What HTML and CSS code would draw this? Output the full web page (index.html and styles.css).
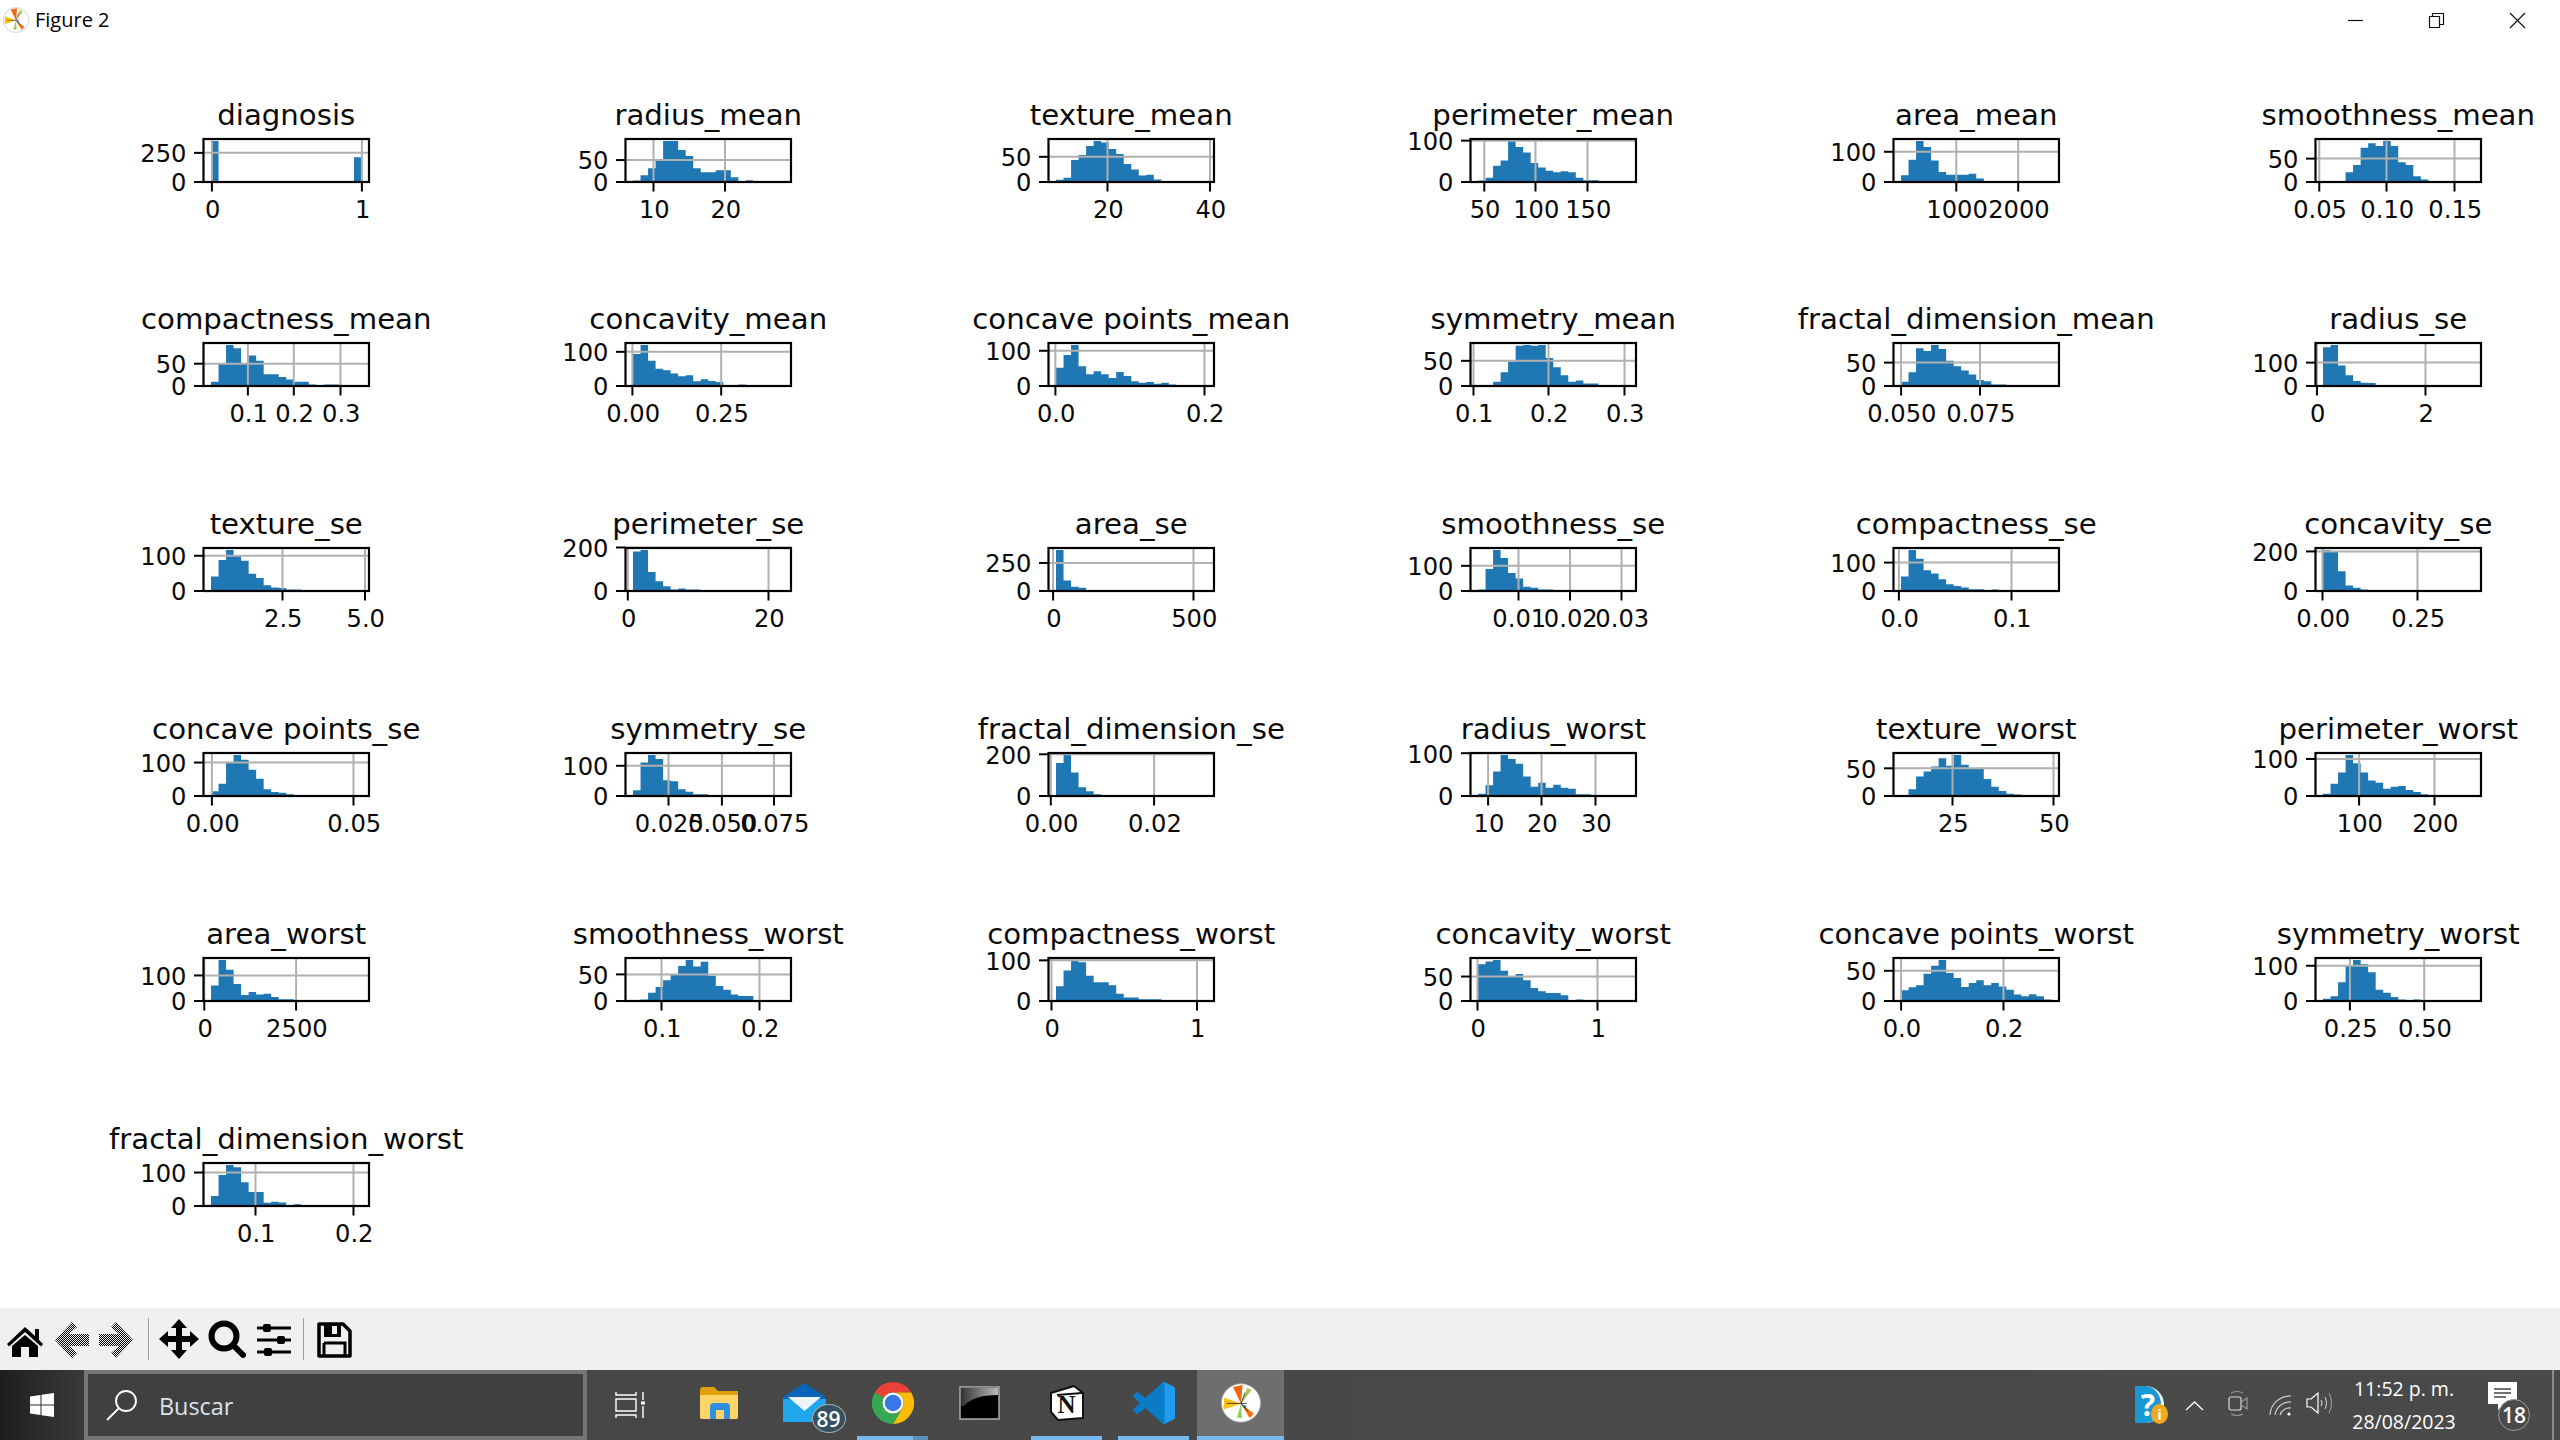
FILE: index.html
```html
<!DOCTYPE html>
<html lang="es">
<head>
<meta charset="utf-8">
<title>Figure 2</title>
<link rel="stylesheet" href="styles.css">
</head>
<body>
<svg class="defs" width="0" height="0" aria-hidden="true">
  <defs>
    <pattern id="dither" width="2" height="2" patternUnits="userSpaceOnUse">
      <rect width="1" height="1" fill="#000"/><rect x="1" y="1" width="1" height="1" fill="#000"/>
    </pattern>
    <linearGradient id="sheen" x1="0" y1="0" x2="1" y2="0"><stop offset="0" stop-color="#333"/><stop offset="1" stop-color="#bbb"/></linearGradient>
    <symbol id="mpl" viewBox="0 0 100 100">
      <ellipse cx="50" cy="50" rx="49" ry="48" fill="#fff" stroke="#aaa" stroke-width="2"/>
      <path d="M50 52 30 10 54 5Z" fill="#f5660f"/>
      <path d="M50 52 8 36 6 66Z" fill="#fbc40a"/>
      <path d="M50 52 66 12 76 18Z" fill="#a6c84a"/>
      <path d="M50 52 40 86 52 88Z" fill="#8ed05a"/>
      <path d="M50 52 82 76 72 88Z" fill="#f0740c"/>
      <path d="M50 52 64 58 60 64Z" fill="#3a6fb0"/>
      <path d="M14 51H64M50 52 60 24M50 52 68 70" stroke="#222" stroke-width="2" fill="none"/>
    </symbol>
  </defs>
</svg>

<header class="titlebar">
  <div class="title-left">
    <svg class="title-icon" width="26" height="28"><use href="#mpl"/></svg>
    <span class="title-text">Figure 2</span>
  </div>
  <div class="win-controls">
    <button class="win-btn"><svg width="17" height="17" viewBox="0 0 17 17"><path d="M1 8.5H16" stroke="#111" stroke-width="1.2"/></svg></button>
    <button class="win-btn"><svg width="17" height="17" viewBox="0 0 17 17"><path d="M1.5 4.5H11.5V15.5H1.5ZM4.5 4.5V1.5H15.5V12.5H11.5" fill="none" stroke="#111" stroke-width="1.2"/></svg></button>
    <button class="win-btn"><svg width="17" height="17" viewBox="0 0 17 17"><path d="M1 1 16 16M16 1 1 16" stroke="#111" stroke-width="1.2"/></svg></button>
  </div>
</header>

<main class="figure" id="figure"></main>

<nav class="toolbar">
  <svg class="tool tool-home" width="36" height="30" viewBox="0 0 36 30"><path d="M18 0 28 9V2H32V13L36 17 34 19.500 18 5 2 19.500 0 17Z" fill="#000"/><path d="M18 8 31 19V30H22V20H14V30H5V19Z" fill="#000"/></svg>
  <svg class="tool tool-back" width="34" height="36" viewBox="0 0 34 36"><path d="M0 18 17 0 22 5 14 12H34V24H14L22 31 17 36Z" fill="url(#dither)"/></svg>
  <svg class="tool tool-fwd" width="34" height="36" viewBox="0 0 34 36"><path d="M34 18 17 0 12 5 20 12H0V24H20L12 31 17 36Z" fill="url(#dither)"/></svg>
  <i class="tool-sep"></i>
  <svg class="tool tool-move" width="40" height="40" viewBox="0 0 40 40"><path d="M20 0 28 9H23V17H31V12L40 20 31 28V23H23V31H28L20 40 12 31H17V23H9V28L0 20 9 12V17H17V9H12Z" fill="#000"/></svg>
  <svg class="tool tool-zoom" width="38" height="38" viewBox="0 0 38 38"><circle cx="16" cy="16" r="12.500" fill="none" stroke="#000" stroke-width="6"/><path d="M25 25 35 35" stroke="#000" stroke-width="6" stroke-linecap="round"/></svg>
  <svg class="tool tool-sliders" width="34" height="32" viewBox="0 0 34 32"><path d="M0 4H34M0 16H34M0 28H34" stroke="#000" stroke-width="3"/><rect x="6" y="0" width="8" height="8" rx="2"/><rect x="20" y="12" width="8" height="8" rx="2"/><rect x="7" y="24" width="8" height="8" rx="2"/></svg>
  <i class="tool-sep"></i>
  <svg class="tool tool-save" width="35" height="36" viewBox="0 0 35 36"><path d="M2 2H26L33 9V34H2Z" fill="none" stroke="#000" stroke-width="3.500" stroke-linejoin="round"/><path d="M7 2H24V15H7Z" fill="#000"/><rect x="15" y="4" width="5" height="8" fill="#f0f0f0"/><path d="M7 21H28V33" fill="none" stroke="#000" stroke-width="3"/><path d="M7 21V33" stroke="#000" stroke-width="3"/></svg>
</nav>

<footer class="taskbar">
  <div class="start">
    <svg width="24" height="24" viewBox="0 0 24 24"><path d="M0 3.500 10.500 2V11.500H0ZM11.500 1.800 24 0V11.500H11.500ZM0 12.500H10.500V22L0 20.500ZM11.500 12.500H24V24L11.500 22.200Z" fill="#fff"/></svg>
  </div>
  <div class="searchbox">
    <svg class="search-ico" width="32" height="32" viewBox="0 0 32 32"><circle cx="20" cy="12" r="10" fill="none" stroke="#fff" stroke-width="1.800"/><path d="M13 19 1 31" stroke="#fff" stroke-width="1.800"/></svg>
    <span class="search-text">Buscar</span>
  </div>
  <div class="slots">
    <div class="slot slot-taskview">
      <svg width="30" height="28" viewBox="0 0 30 28"><path d="M1 1V4H21V1M1 8H21V20H1ZM1 27V24H21V27M28 1V9M28 15V27" fill="none" stroke="#fff" stroke-width="1.400"/><rect x="26" y="10.500" width="4" height="3" fill="#fff"/></svg>
    </div>
    <div class="slot">
      <svg width="38" height="32" viewBox="0 0 38 32"><path d="M0 3Q0 0 3 0H14L18 4H38V30Q38 32 36 32H2Q0 32 0 30Z" fill="#e0a20c"/><path d="M0 8H38V30Q38 32 36 32H2Q0 32 0 30Z" fill="#fdd567"/><path d="M10 32V20Q10 16 14 16H26Q30 16 30 20V32H24V23H16V32Z" fill="#2f8fe0"/></svg>
    </div>
    <div class="slot">
      <div class="badged">
        <svg width="43" height="40" viewBox="0 0 43 40"><path d="M0 14 21.500 0 43 14V39H0Z" fill="#0a64b8"/><path d="M0 16H43V39H0Z" fill="#1fa6ec"/><path d="M5 14H38L21.500 28Z" fill="#eef4f8"/></svg>
        <span class="badge badge-mail">89</span>
      </div>
    </div>
    <div class="slot running split">
      <svg width="42" height="42" viewBox="3 3 42 42"><path d="M24 3A21 21 0 0 1 42.200 13.500H24A10.500 10.500 0 0 0 14.900 18.750L5.800 13.500A21 21 0 0 1 24 3Z" fill="#ea4335"/><path d="M42.200 13.500A21 21 0 0 1 24 45L33.100 29.250A10.500 10.500 0 0 0 24 13.500Z" fill="#fbbc05"/><path d="M24 45A21 21 0 0 1 5.800 13.500L14.900 18.750A10.500 10.500 0 0 0 33.100 29.250Z" fill="#34a853"/><circle cx="24" cy="24" r="10.500" fill="#fff"/><circle cx="24" cy="24" r="8.300" fill="#3b78e7"/></svg>
    </div>
    <div class="slot">
      <svg width="41" height="34" viewBox="0 0 41 34"><rect x="1" y="1" width="39" height="32" fill="#000" stroke="#a9adb3" stroke-width="1.500"/><path d="M2 2H39V9Q14 9 5 20H2Z" fill="url(#sheen)"/></svg>
    </div>
    <div class="slot running">
      <div class="notion">
        <svg width="34" height="36" viewBox="0 0 34 36"><path d="M1 8 24 1 33 8V33L8 35 1 27Z" fill="#fff" stroke="#111" stroke-width="2" stroke-linejoin="round"/><path d="M7 10 32 8" stroke="#111" stroke-width="2"/></svg>
        <span class="notion-n">N</span>
      </div>
    </div>
    <div class="slot running">
      <svg width="42" height="42" viewBox="0 0 100 100"><path d="M70.900 99.300C72.500 99.900 74.300 99.900 75.900 99.100L96.500 89.200C98.600 88.200 100 86 100 83.600V16.400C100 14 98.600 11.800 96.500 10.800L75.900 .9C73.800-.1 71.300.1 69.500 1.400 69.300 1.600 69 1.800 68.800 2.100L29.400 38 12.200 25C10.600 23.800 8.400 23.900 6.900 25.200L1.400 30.300C-.5 31.900-.5 34.800 1.400 36.400L16.200 50 1.400 63.600C-.5 65.200-.5 68.100 1.400 69.700L6.900 74.800C8.400 76.100 10.600 76.200 12.200 75L29.400 62 68.800 97.900C69.400 98.500 70.100 99 70.900 99.300ZM75 27.300 45.100 50 75 72.700Z" fill="#0a7cc4"/><path d="M75.900 99.100 96.500 89.200C98.600 88.200 100 86 100 83.600V16.400C100 14 98.600 11.800 96.500 10.800L75.900 .9C74.300.1 72.500 0 71 .6 73.500 2 75 4.500 75 7.500V92.500C75 95.500 73.500 98 71 99.400 72.500 100 74.300 99.900 75.900 99.100Z" fill="#1f9cf0"/></svg>
    </div>
    <div class="slot running active">
      <svg width="40" height="40"><use href="#mpl"/></svg>
    </div>
  </div>
  <div class="tray">
    <div class="tray-help">
      <span class="help-q">?</span>
      <span class="help-i">i</span>
    </div>
    <svg class="tray-chev" width="19" height="11" viewBox="0 0 19 11"><path d="M1 10 9.500 2 18 10" fill="none" stroke="#fff" stroke-width="1.300"/></svg>
    <svg class="tray-cam" width="20" height="27" viewBox="0 0 20 27"><rect x="1" y="7" width="12" height="13" rx="2" fill="none" stroke="#ddd" stroke-width="1.200"/><path d="M13 12 19 8V19L13 15" fill="none" stroke="#999" stroke-width="1.200"/><path d="M3 3Q9 0 15 3M3 24Q9 27 15 24" fill="none" stroke="#999" stroke-width="1.100"/></svg>
    <svg class="tray-wifi" width="23" height="22" viewBox="0 0 23 22"><path d="M1 21A20 20 0 0 1 22 2" fill="none" stroke="#ccc" stroke-width="1.200"/><path d="M6 21A15 15 0 0 1 22 8" fill="none" stroke="#ccc" stroke-width="1.200"/><path d="M11 21A10 10 0 0 1 22 14" fill="none" stroke="#ccc" stroke-width="1.200"/><circle cx="20" cy="20" r="1.600" fill="#fff"/></svg>
    <svg class="tray-vol" width="27" height="24" viewBox="0 0 27 24"><path d="M1 8H5L12 2V22L5 16H1Z" fill="none" stroke="#fff" stroke-width="1.200"/><path d="M15 9Q17 12 15 15M19 6Q22 12 19 18" fill="none" stroke="#ccc" stroke-width="1.100"/><path d="M23 2Q28 12 23 22" fill="none" stroke="#999" stroke-width="1.100"/></svg>
    <div class="clock">
      <span class="clock-time">11:52 p. m.</span>
      <span class="clock-date">28/08/2023</span>
    </div>
    <div class="notif">
      <svg width="29" height="28" viewBox="0 0 29 28"><path d="M0 0H29V22H18L10 28V22H0Z" fill="#fff"/><path d="M6 7H23M6 11H23M6 15H18" stroke="#444" stroke-width="1.500"/></svg>
      <span class="badge badge-notif">18</span>
    </div>
    <i class="show-desktop"></i>
  </div>
</footer>
<script src="charts.js"></script>
</body>
</html>
```
FILE: styles.css
```css
* { box-sizing: border-box; }
html, body { margin: 0; padding: 0; }
body {
  width: 2560px;
  height: 1440px;
  overflow: hidden;
  background: #fff;
  display: flex;
  flex-direction: column;
  font-family: "DejaVu Sans", sans-serif;
}
.defs { position: absolute; }

/* window title bar */
.titlebar {
  height: 40px;
  flex: none;
  display: flex;
  justify-content: space-between;
  align-items: flex-start;
}
.title-left { display: flex; align-items: center; gap: 6px; padding: 6px 0 0 3px; }
.title-icon { display: block; }
.title-text { font: 20px/28px "Open Sans", sans-serif; color: #000; }
.win-controls { display: flex; padding: 12px 0 0 0; }
.win-btn {
  width: 81px;
  height: 17px;
  padding: 0;
  border: 0;
  background: none;
  display: flex;
  justify-content: center;
}
.win-btn:last-child { margin-right: 2px; }

/* figure */
.figure {
  flex: 1;
  padding-top: 38.7px;
  display: grid;
  grid-template-columns: repeat(6, 422.4px);
  grid-auto-rows: 204.8px;
  align-content: start;
}
.chart { display: block; overflow: visible; }
.chart-title { font: 29.2px "DejaVu Sans", sans-serif; text-anchor: middle; fill: #0a0a0a; }
.tick-label { font: 24.2px "DejaVu Sans", sans-serif; fill: #0a0a0a; }
.tick-x { text-anchor: middle; }
.tick-y { text-anchor: end; }
.bars { fill: #1f77b4; }
.grid-line { stroke: #b0b0b0; stroke-width: 2; }
.tick-mark { stroke: #000; stroke-width: 2; }
.spine { fill: none; stroke: #000; stroke-width: 2.2; }

/* toolbar */
.toolbar {
  height: 62px;
  flex: none;
  background: #f0f0f0;
  display: flex;
  align-items: center;
}
.tool { display: block; flex: none; }
.tool-home { margin-left: 7px; margin-top: 6px; }
.tool-back { margin-left: 12px; margin-top: 2px; }
.tool-fwd { margin-left: 10px; margin-top: 2px; }
.tool-sep { width: 1px; height: 42px; background: #a0a0a0; flex: none; }
.toolbar .tool-fwd + .tool-sep { margin-left: 15px; }
.tool-move { margin-left: 10px; }
.tool-zoom { margin-left: 9px; }
.tool-sliders { margin-left: 11px; margin-top: 2px; }
.tool-sliders + .tool-sep { margin-left: 12px; }
.tool-save { margin-left: 13px; margin-top: 1px; }

/* taskbar */
.taskbar {
  height: 70px;
  flex: none;
  display: flex;
  background: linear-gradient(90deg, #1e1e1e 0, #3a3a3a 84px, #474747 600px, #4a4a4a 100%);
  color: #fff;
  font-family: "Open Sans", sans-serif;
}
.start { width: 84px; flex: none; display: flex; justify-content: center; align-items: center; }
.searchbox {
  width: 503px;
  flex: none;
  background: #404040;
  border: 4px solid #767676;
  display: flex;
  align-items: center;
  padding: 0 0 0 18px;
}
.search-ico { display: block; margin-right: 21px; }
.search-text { font-size: 23.4px; color: #dbe3ea; margin-top: 2px; }
.slots { display: flex; padding-left: 1px; }
.slot {
  width: 87px;
  height: 70px;
  display: flex;
  align-items: center;
  justify-content: center;
  position: relative;
  padding-bottom: 4px;
}
.slot-taskview { padding: 0 3px 0 0; }
.slot.running::after {
  content: "";
  position: absolute;
  left: 8px;
  right: 8px;
  bottom: 0;
  height: 4px;
  background: #76b9ed;
}
.slot.split::before {
  content: "";
  position: absolute;
  right: 8px;
  bottom: 0;
  width: 15px;
  height: 4px;
  background: #5a8fb8;
  z-index: 1;
}
.slot.active { background: #6e6e6e; }
.slot.active::after { left: 0; right: 0; }
.slot svg { display: block; }
.badged { position: relative; width: 43px; height: 40px; margin-left: -3px; }
.badge {
  position: absolute;
  display: flex;
  align-items: center;
  justify-content: center;
  border-radius: 50%;
  border: 1px solid #aaa;
  color: #fff;
  font-weight: 600;
  font-size: 21px;
  font-family: "Open Sans", sans-serif;
}
.badge-mail {
  width: 34px;
  height: 29px;
  left: 29px;
  top: 21px;
  background: #35505f;
}
.notion { position: relative; width: 34px; height: 36px; }
.notion-n {
  position: absolute;
  left: 8px;
  top: 6px;
  font: bold 25px/28px "Liberation Serif", serif;
  color: #111;
}

/* tray */
.tray { flex: 1; display: flex; align-items: center; position: relative; min-width: 0; }
.tray-help {
  margin-left: 851px;
  width: 33px;
  height: 38px;
  position: relative;
  flex: none;
}
.help-q {
  position: absolute;
  left: 0;
  top: 0;
  width: 29px;
  height: 37px;
  border-radius: 0 19px 19px 0;
  background: #1899d6;
  border-right: 3px solid #fff;
  font: bold 30px/37px "Open Sans", sans-serif;
  color: #fff;
  text-align: center;
}
.help-i {
  position: absolute;
  left: 16px;
  top: 18px;
  width: 17px;
  height: 20px;
  border-radius: 50%;
  background: #f4a81d;
  font: bold 15px/20px "Open Sans", sans-serif;
  text-align: center;
  color: #fff;
}
.tray-chev { display: block; margin-left: 17px; flex: none; }
.tray-cam { display: block; margin-left: 23.5px; flex: none; margin-top: -4px; }
.tray-wifi { display: block; margin-left: 21px; flex: none; }
.tray-vol { display: block; margin-left: 14.5px; flex: none; margin-top: -4px; }
.clock {
  width: 102px;
  margin-left: 20px;
  flex: none;
  display: flex;
  flex-direction: column;
  align-items: center;
  gap: 6px;
  font-size: 19.5px;
  line-height: 27px;
  color: #fff;
}
.clock-time, .clock-date { white-space: nowrap; }
.notif { position: relative; width: 40px; height: 46px; margin-left: 33px; flex: none; }
.notif svg { display: block; }
.badge-notif {
  width: 32px;
  height: 32px;
  left: 10px;
  top: 17px;
  background: #4a4a4a;
  border-color: #999;
}
.show-desktop {
  position: absolute;
  right: 6px;
  top: 0;
  bottom: 0;
  width: 2px;
  background: #8a8a8a;
}
```
FILE: charts.js
```js
// Histogram data: [title, x ticks [label, px from axes left], y ticks [label, bar units], 20 bin heights]
var CHARTS = [
 ['diagnosis',[['0',8.4],['1',158.4]],[['250',81]],[114,0,0,0,0,0,0,0,0,0,0,0,0,0,0,0,0,0,0,69]],
 ['radius_mean',[['10',28],['20',99.5]],[['50',61]],[4,19,38,59,114,114,89,72,38,27,27,33,33,13,0,5]],
 ['texture_mean',[['20',59],['40',161.5]],[['50',70]],[6,12,61,75,100,114,110,92,78,50,35,18,20,7]],
 ['perimeter_mean',[['50',13.8],['100',65],['150',117]],[['100',115]],[4,12,45,60,114,97,82,53,40,31,27,30,27,12,5,5]],
 ['area_mean',[['1000',62.8],['2000',124.7]],[['100',84]],[19,62,114,97,60,28,20,20,20,23,10,2]],
 ['smoothness_mean',[['0.05',3.8],['0.10',71],['0.15',139]],[['50',65]],[0,0,3,27,47,95,108,100,114,100,55,47,16,7]],
 ['compactness_mean',[['0.1',44.4],['0.2',90.3],['0.3',137]],[['50',62]],[12,62,114,105,62,85,70,33,33,25,18,12,12,4,2,4,4]],
 ['concavity_mean',[['0.00',6.9],['0.25',95.7]],[['100',95]],[89,114,70,48,44,35,27,30,13,19,14,11,1,0,4]],
 ['concave points_mean',[['0.0',6.9],['0.2',156]],[['100',98]],[51,86,114,55,33,41,33,22,39,28,13,9,11,6,9,4]],
 ['symmetry_mean',[['0.1',3],['0.2',78],['0.3',154]],[['50',70]],[0,3,12,38,68,112,114,112,114,78,52,30,12,15,7,7]],
 ['fractal_dimension_mean',[['0.050',7.6],['0.075',86.5]],[['50',65]],[12,38,105,97,114,103,70,55,43,32,17,13,4,4]],
 ['radius_se',[['0',1.5],['2',110]],[['100',65]],[108,114,57,30,14,9,8,3]],
 ['texture_se',[['2.5',79],['5.0',161.5]],[['100',98]],[40,86,114,97,84,48,36,16,10,8,4,4]],
 ['perimeter_se',[['0',2.3],['20',143]],[['200',121]],[110,114,53,27,13,4,7,4,4]],
 ['area_se',[['0',4.6],['500',145]],[['250',78]],[114,29,12,9,3]],
 ['smoothness_se',[['0.01',48],['0.02',99.5],['0.03',151]],[['100',70]],[4,61,114,92,50,35,12,9,4,4]],
 ['compactness_se',[['0.0',5.4],['0.1',118]],[['100',79]],[40,114,90,58,49,33,19,14,10,5,5,0,4]],
 ['concavity_se',[['0.00',7],['0.25',102]],[['200',110]],[114,110,55,15,9,4]],
 ['concave points_se',[['0.00',8.4],['0.05',150]],[['100',93]],[13,34,93,114,101,73,48,19,11,9,5]],
 ['symmetry_se',[['0.025',43],['0.050',96.4],['0.075',148.5]],[['100',84]],[16,93,114,103,44,41,19,12,5,5]],
 ['fractal_dimension_se',[['0.00',2.3],['0.02',105.6]],[['200',116]],[92,114,65,24,13,5]],
 ['radius_worst',[['10',17.6],['20',71],['30',125]],[['100',119]],[6,30,68,114,103,90,54,26,37,23,31,23,20,5,5]],
 ['texture_worst',[['25',59],['50',160]],[['50',77]],[0,19,54,68,82,105,84,114,87,78,78,47,26,14,6,4]],
 ['perimeter_worst',[['100',43.6],['200',119]],[['100',103]],[6,34,65,114,91,65,43,37,20,26,28,17,11,5,2]],
 ['area_worst',[['0',0.8],['2500',92.6]],[['100',71]],[43,114,87,47,17,25,18,20,11,5,5]],
 ['smoothness_worst',[['0.1',36],['0.2',134]],[['50',74]],[0,4,23,39,58,72,97,114,96,109,70,42,31,18,14,14]],
 ['compactness_worst',[['0',3],['1',148.5]],[['100',113]],[41,85,111,108,70,52,52,44,20,10,10,5,5,5]],
 ['concavity_worst',[['0',7],['1',127]],[['50',68]],[102,110,114,84,68,75,58,36,27,22,22,16,0,4]],
 ['concave points_worst',[['0.0',7.6],['0.2',110]],[['50',84]],[30,38,44,76,98,114,78,64,39,50,58,44,50,40,31,18,13,19,13,4]],
 ['symmetry_worst',[['0.25',34.4],['0.50',108.7]],[['100',98]],[6,13,52,98,114,102,80,31,23,11,4,0,4]],
 ['fractal_dimension_worst',[['0.1',52],['0.2',150]],[['100',93]],[28,86,114,108,66,39,39,9,12,10,3,5]]
];

var AX = 203.5, AY = 60, AW = 165.5, AH = 43, UNIT = 41 / 114;
var BIN = AW / 1.1 / 20, PAD = AW * 0.05 / 1.1;
var B = AY + AH;
function n(v) { return +v.toFixed(2); }

function chartSvg(c) {
  var s = '<svg class="chart" width="422.4" height="204.8" viewBox="0 0 422.4 204.8">';
  s += '<text class="chart-title" x="' + n(AX + AW / 2) + '" y="45.6">' + c[0] + '</text>';
  // bars as one outline so that neighbouring bins have no seams
  var d = 'M' + n(AX + PAD) + ' ' + B;
  for (var i = 0; i < c[3].length; i++) {
    var y = n(B - c[3][i] * UNIT);
    d += 'V' + y + 'H' + n(AX + PAD + (i + 1) * BIN);
  }
  d += 'V' + B + 'Z';
  s += '<path class="bars" d="' + d + '"/>';
  c[1].forEach(function (t) {
    var x = n(AX + t[1]);
    s += '<path class="grid-line" d="M' + x + ' ' + AY + 'V' + B + '"/>';
    s += '<path class="tick-mark" d="M' + x + ' ' + B + 'v9.5"/>';
    s += '<text class="tick-label tick-x" x="' + n(x + 0.8) + '" y="139.2">' + t[0] + '</text>';
  });
  var ys = [['0', 0]].concat(c[2]);
  ys.forEach(function (t) {
    var y = n(B - t[1] * UNIT);
    if (t[1] > 0) s += '<path class="grid-line" d="M' + AX + ' ' + y + 'H' + (AX + AW) + '"/>';
    s += '<path class="tick-mark" d="M' + AX + ' ' + y + 'h-9.5"/>';
    s += '<text class="tick-label tick-y" x="' + (AX - 17) + '" y="' + n(y + 9.4) + '">' + t[0] + '</text>';
  });
  s += '<rect class="spine" x="' + AX + '" y="' + AY + '" width="' + AW + '" height="' + AH + '"/>';
  return s + '</svg>';
}

document.getElementById('figure').innerHTML = CHARTS.map(chartSvg).join('');
```
